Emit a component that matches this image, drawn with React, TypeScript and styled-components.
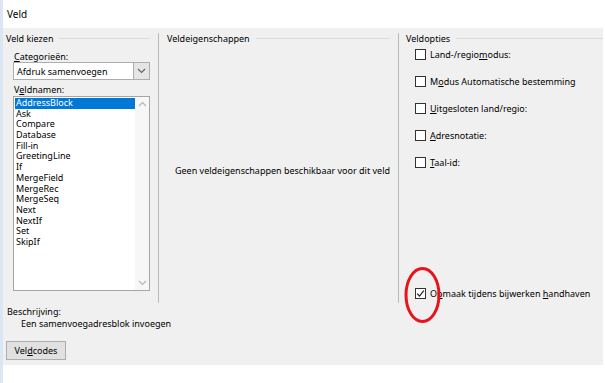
import React from "react";
import styled, { createGlobalStyle } from "styled-components";

const GlobalStyle = createGlobalStyle`
  html, body {
    margin: 0;
    padding: 0;
    background: #ffffff;
  }
  body {
    font-family: "Noto Sans", "Open Sans", sans-serif;
    font-size: 9px;
    color: #000000;
  }
`;

const Window = styled.div`
  position: relative;
  width: 605px;
  height: 383px;
  box-sizing: border-box;
  border-left: 3px solid #dae6f3;
  background: #ffffff;
  display: flex;
  flex-direction: column;
`;

const TitleBar = styled.div`
  height: 28px;
  display: flex;
  align-items: center;
  padding-left: 4px;
  font-size: 10px;
`;

const Body = styled.div`
  width: 600px;
  height: 337px;
  background: #f0f0f0;
  display: flex;
  flex-direction: column;
`;

const Columns = styled.div`
  display: grid;
  grid-template-columns: 155px 240px 205px;
  height: 275px;
  padding-top: 5px;
  box-sizing: border-box;
`;

const Column = styled.div<{ $divider?: boolean }>`
  display: flex;
  flex-direction: column;
  border-left: ${(p) => (p.$divider ? "1px solid #b9b9b9" : "none")};
  min-height: 0;
`;

const GroupHeader = styled.div<{ $pad: number; $end: number }>`
  height: 10px;
  display: flex;
  align-items: center;
  gap: 6px;
  padding-left: ${(p) => p.$pad}px;
  padding-right: ${(p) => p.$end}px;
  white-space: nowrap;

  &::after {
    content: "";
    flex: 1;
    height: 1px;
    background: #dcdcdc;
  }
`;

const FieldPicker = styled.div`
  display: flex;
  flex-direction: column;
  padding-left: 10px;
  padding-top: 8px;
`;

const Label = styled.div<{ $gap?: number }>`
  height: 11px;
  line-height: 11px;
  margin-top: ${(p) => p.$gap ?? 0}px;
  padding-left: 1px;
`;

const Select = styled.div`
  width: 137px;
  height: 18px;
  box-sizing: border-box;
  background: #ffffff;
  border: 1px solid #adadad;
  display: flex;
  align-items: center;
`;

const SelectValue = styled.div`
  flex: 1;
  padding-left: 3px;
`;

const SelectButton = styled.div`
  width: 16px;
  height: 16px;
  box-sizing: border-box;
  border-left: 1px solid #adadad;
  background: #e5e5e5;
  display: flex;
  align-items: center;
  justify-content: center;
  color: #606060;
`;

const ListBox = styled.div`
  margin-top: 1px;
  width: 137px;
  height: 195px;
  box-sizing: border-box;
  border: 1px solid #a5a5a5;
  background: #ffffff;
  display: flex;
`;

const ListItems = styled.div`
  flex: 1;
  padding: 1px 0 0 1px;
`;

const ListItem = styled.div<{ $selected?: boolean }>`
  height: 10.7px;
  line-height: 10.7px;
  padding-left: 1px;
  background: ${(p) => (p.$selected ? "#0078d7" : "transparent")};
  color: ${(p) => (p.$selected ? "#ffffff" : "#000000")};
`;

const ScrollBar = styled.div`
  width: 14px;
  background: #f7f7f7;
  display: flex;
  flex-direction: column;
  justify-content: space-between;
  align-items: center;
  padding: 4px 0;
  color: #b4b4b4;
`;

const EmptyNote = styled.div`
  flex: 1;
  display: flex;
  align-items: center;
  justify-content: center;
  padding: 0 0 6px 8px;
  white-space: nowrap;
`;

const OptionList = styled.div`
  flex: 1;
  display: flex;
  flex-direction: column;
  gap: 16px;
  padding: 6px 0 4px 16px;
`;

const OptionRow = styled.label<{ $bottom?: boolean }>`
  height: 11px;
  display: flex;
  align-items: center;
  gap: 4px;
  white-space: nowrap;
  margin-top: ${(p) => (p.$bottom ? "auto" : "0")};
`;

const Box = styled.span`
  width: 11px;
  height: 11px;
  box-sizing: border-box;
  border: 1px solid #333333;
  background: #ffffff;
  display: flex;
  align-items: center;
  justify-content: center;
`;

const Description = styled.div`
  display: flex;
  flex-direction: column;
  padding: 3px 0 0 3px;
`;

const DescriptionText = styled.div`
  height: 12px;
  line-height: 12px;
  padding-left: 15px;
  margin-top: 1px;
`;

const Button = styled.div`
  margin: 11px 0 0 3px;
  width: 60px;
  height: 19px;
  box-sizing: border-box;
  border: 1px solid #adadad;
  background: #e1e1e1;
  display: flex;
  align-items: center;
  justify-content: center;
`;

const Annotation = styled.svg`
  position: absolute;
  left: 398px;
  top: 266px;
  pointer-events: none;
`;

const Chevron = ({ up }: { up?: boolean }) => (
  <svg width="9" height="6" viewBox="0 0 9 6">
    <polyline
      points={up ? "1,5 4.5,1.5 8,5" : "1,1 4.5,4.5 8,1"}
      fill="none"
      stroke="currentColor"
      strokeWidth="1.1"
    />
  </svg>
);

const Checkbox = ({ checked }: { checked?: boolean }) => (
  <Box>
    {checked && (
      <svg width="9" height="9" viewBox="0 0 9 9">
        <polyline points="1.2,4.6 3.5,7 7.8,1.6" fill="none" stroke="#222" strokeWidth="1.2" />
      </svg>
    )}
  </Box>
);

const fields = [
  "AddressBlock",
  "Ask",
  "Compare",
  "Database",
  "Fill-in",
  "GreetingLine",
  "If",
  "MergeField",
  "MergeRec",
  "MergeSeq",
  "Next",
  "NextIf",
  "Set",
  "SkipIf",
];

export default function App() {
  return (
    <Window>
      <GlobalStyle />
      <TitleBar>Veld</TitleBar>
      <Body>
        <Columns>
          <Column>
            <GroupHeader $pad={3} $end={8}>Veld kiezen</GroupHeader>
            <FieldPicker>
              <Label>
                <u>C</u>ategorieën:
              </Label>
              <Select>
                <SelectValue>Afdruk samenvoegen</SelectValue>
                <SelectButton>
                  <Chevron />
                </SelectButton>
              </Select>
              <Label $gap={4}>
                V<u>e</u>ldnamen:
              </Label>
              <ListBox>
                <ListItems>
                  {fields.map((f, i) => (
                    <ListItem key={f} $selected={i === 0}>
                      {f}
                    </ListItem>
                  ))}
                </ListItems>
                <ScrollBar>
                  <Chevron up />
                  <Chevron />
                </ScrollBar>
              </ListBox>
            </FieldPicker>
          </Column>

          <Column $divider>
            <GroupHeader $pad={8} $end={8}>Veldeigenschappen</GroupHeader>
            <EmptyNote>Geen veldeigenschappen beschikbaar voor dit veld</EmptyNote>
          </Column>

          <Column $divider>
            <GroupHeader $pad={7} $end={0}>Veldopties</GroupHeader>
            <OptionList>
              <OptionRow>
                <Checkbox />
                <span>
                  Land-/regio<u>m</u>odus:
                </span>
              </OptionRow>
              <OptionRow>
                <Checkbox />
                <span>
                  M<u>o</u>dus Automatische bestemming
                </span>
              </OptionRow>
              <OptionRow>
                <Checkbox />
                <span>
                  <u>U</u>itgesloten land/regio:
                </span>
              </OptionRow>
              <OptionRow>
                <Checkbox />
                <span>
                  <u>A</u>dresnotatie:
                </span>
              </OptionRow>
              <OptionRow>
                <Checkbox />
                <span>
                  <u>T</u>aal-id:
                </span>
              </OptionRow>
              <OptionRow $bottom>
                <Checkbox checked />
                <span>
                  O<u>p</u>maak tijdens bijwerken <u>h</u>andhaven
                </span>
              </OptionRow>
            </OptionList>
          </Column>
        </Columns>

        <Description>
          <Label>Beschrijving:</Label>
          <DescriptionText>Een samenvoegadresblok invoegen</DescriptionText>
        </Description>
        <Button>
          Vel<u>d</u>codes
        </Button>
      </Body>

      <Annotation width="42" height="60" viewBox="0 0 42 60">
        <ellipse cx="21.5" cy="29" rx="16.5" ry="26.5" fill="none" stroke="#e8141c" strokeWidth="3" />
      </Annotation>
    </Window>
  );
}
